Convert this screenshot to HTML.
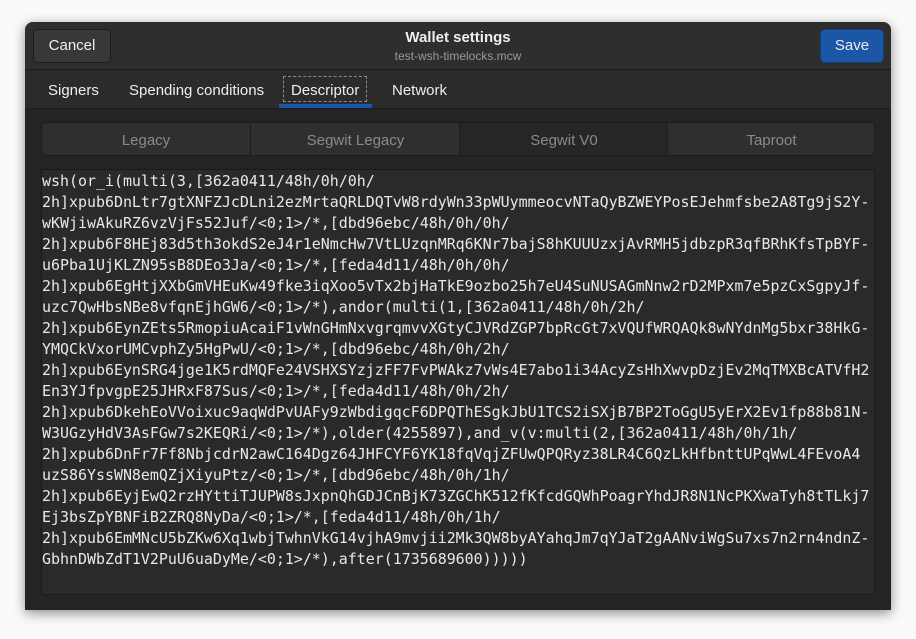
<!DOCTYPE html>
<html><head><style>
body{margin:0;width:916px;height:639px;background:#fafafa;font-family:"Liberation Sans",sans-serif;position:relative;overflow:hidden}
.win{position:absolute;left:25px;top:22px;width:866px;height:588px;background:#242424;border-radius:8px 8px 0 0;box-shadow:0 3px 12px rgba(0,0,0,.45);overflow:hidden}
.hdr{position:absolute;left:0;top:0;width:866px;height:47px;background:#2e2e2e;border-bottom:1px solid #1a1a1a}
.btn{position:absolute;top:7px;height:32px;border-radius:5px;color:#eee;font-size:15px;line-height:32px;text-align:center}
.cancel{left:8px;width:76px;background:#383838;border:1px solid #1c1c1c}
.save{left:795px;width:62px;background:#1c56a6;border:1px solid #15407c}
.title{position:absolute;left:0;width:866px;text-align:center;color:#eee}
.tabs{position:absolute;left:0;top:48px;width:866px;height:38px;background:#2b2b2b;border-bottom:1px solid #1e1e1e}
.tab{position:absolute;top:2px;height:38px;line-height:38px;color:#eee;font-size:15px}
.seg{position:absolute;left:16px;top:100px;width:832px;height:32px;border:1px solid #1c1c1c;border-radius:5px;background:#2f2f2f;overflow:hidden}
.seg div{position:absolute;top:2px;height:32px;line-height:32px;text-align:center;color:#8a8a8a;font-size:15px}
.tv{position:absolute;left:16px;top:147px;width:832px;height:424px;background:#2a2a2a;border:1px solid #1a1a1a}
pre{margin:0;padding:1px 0 0 0;font-family:"DejaVu Sans Mono",monospace;font-size:14.95px;line-height:21px;color:#e8e8e8}
</style></head><body>
<div class="win">
<div class="hdr">
<div class="btn cancel">Cancel</div>
<div class="title" style="top:7px;font-weight:bold;font-size:15px">Wallet settings</div>
<div class="title" style="top:27px;font-size:12px;color:#9a9a9a">test-wsh-timelocks.mcw</div>
<div class="btn save">Save</div>
</div>
<div class="tabs">
<div class="tab" style="left:23px">Signers</div>
<div class="tab" style="left:104px">Spending conditions</div>
<div class="tab" style="left:258px;top:6px;height:26px;line-height:28px;width:84px;border:1px dashed #888;box-sizing:border-box;padding-left:7px">Descriptor</div>
<div style="position:absolute;left:254px;top:34px;width:93px;height:4px;background:#1c56a6"></div>
<div class="tab" style="left:367px">Network</div>
</div>
<div class="seg">
<div style="left:0;width:208px">Legacy</div>
<div style="left:208px;width:209px;border-left:1px solid #1c1c1c">Segwit Legacy</div>
<div style="left:417px;width:208px;border-left:1px solid #1c1c1c;background:#262626;top:0;line-height:36px">Segwit V0</div>
<div style="left:625px;width:207px;border-left:1px solid #1c1c1c">Taproot</div>
</div>
<div class="tv"><pre>wsh(or_i(multi(3,[362a0411/48h/0h/0h/
2h]xpub6DnLtr7gtXNFZJcDLni2ezMrtaQRLDQTvW8rdyWn33pWUymmeocvNTaQyBZWEYPosEJehmfsbe2A8Tg9jS2Y-
wKWjiwAkuRZ6vzVjFs52Juf/&lt;0;1&gt;/*,[dbd96ebc/48h/0h/0h/
2h]xpub6F8HEj83d5th3okdS2eJ4r1eNmcHw7VtLUzqnMRq6KNr7bajS8hKUUUzxjAvRMH5jdbzpR3qfBRhKfsTpBYF-
u6Pba1UjKLZN95sB8DEo3Ja/&lt;0;1&gt;/*,[feda4d11/48h/0h/0h/
2h]xpub6EgHtjXXbGmVHEuKw49fke3iqXoo5vTx2bjHaTkE9ozbo25h7eU4SuNUSAGmNnw2rD2MPxm7e5pzCxSgpyJf-
uzc7QwHbsNBe8vfqnEjhGW6/&lt;0;1&gt;/*),andor(multi(1,[362a0411/48h/0h/2h/
2h]xpub6EynZEts5RmopiuAcaiF1vWnGHmNxvgrqmvvXGtyCJVRdZGP7bpRcGt7xVQUfWRQAQk8wNYdnMg5bxr38HkG-
YMQCkVxorUMCvphZy5HgPwU/&lt;0;1&gt;/*,[dbd96ebc/48h/0h/2h/
2h]xpub6EynSRG4jge1K5rdMQFe24VSHXSYzjzFF7FvPWAkz7vWs4E7abo1i34AcyZsHhXwvpDzjEv2MqTMXBcATVfH2
En3YJfpvgpE25JHRxF87Sus/&lt;0;1&gt;/*,[feda4d11/48h/0h/2h/
2h]xpub6DkehEoVVoixuc9aqWdPvUAFy9zWbdigqcF6DPQThESgkJbU1TCS2iSXjB7BP2ToGgU5yErX2Ev1fp88b81N-
W3UGzyHdV3AsFGw7s2KEQRi/&lt;0;1&gt;/*),older(4255897),and_v(v:multi(2,[362a0411/48h/0h/1h/
2h]xpub6DnFr7Ff8NbjcdrN2awC164Dgz64JHFCYF6YK18fqVqjZFUwQPQRyz38LR4C6QzLkHfbnttUPqWwL4FEvoA4
uzS86YssWN8emQZjXiyuPtz/&lt;0;1&gt;/*,[dbd96ebc/48h/0h/1h/
2h]xpub6EyjEwQ2rzHYttiTJUPW8sJxpnQhGDJCnBjK73ZGChK512fKfcdGQWhPoagrYhdJR8N1NcPKXwaTyh8tTLkj7
Ej3bsZpYBNFiB2ZRQ8NyDa/&lt;0;1&gt;/*,[feda4d11/48h/0h/1h/
2h]xpub6EmMNcU5bZKw6Xq1wbjTwhnVkG14vjhA9mvjii2Mk3QW8byAYahqJm7qYJaT2gAANviWgSu7xs7n2rn4ndnZ-
GbhnDWbZdT1V2PuU6uaDyMe/&lt;0;1&gt;/*),after(1735689600)))))</pre></div>
</div>
</body></html>
